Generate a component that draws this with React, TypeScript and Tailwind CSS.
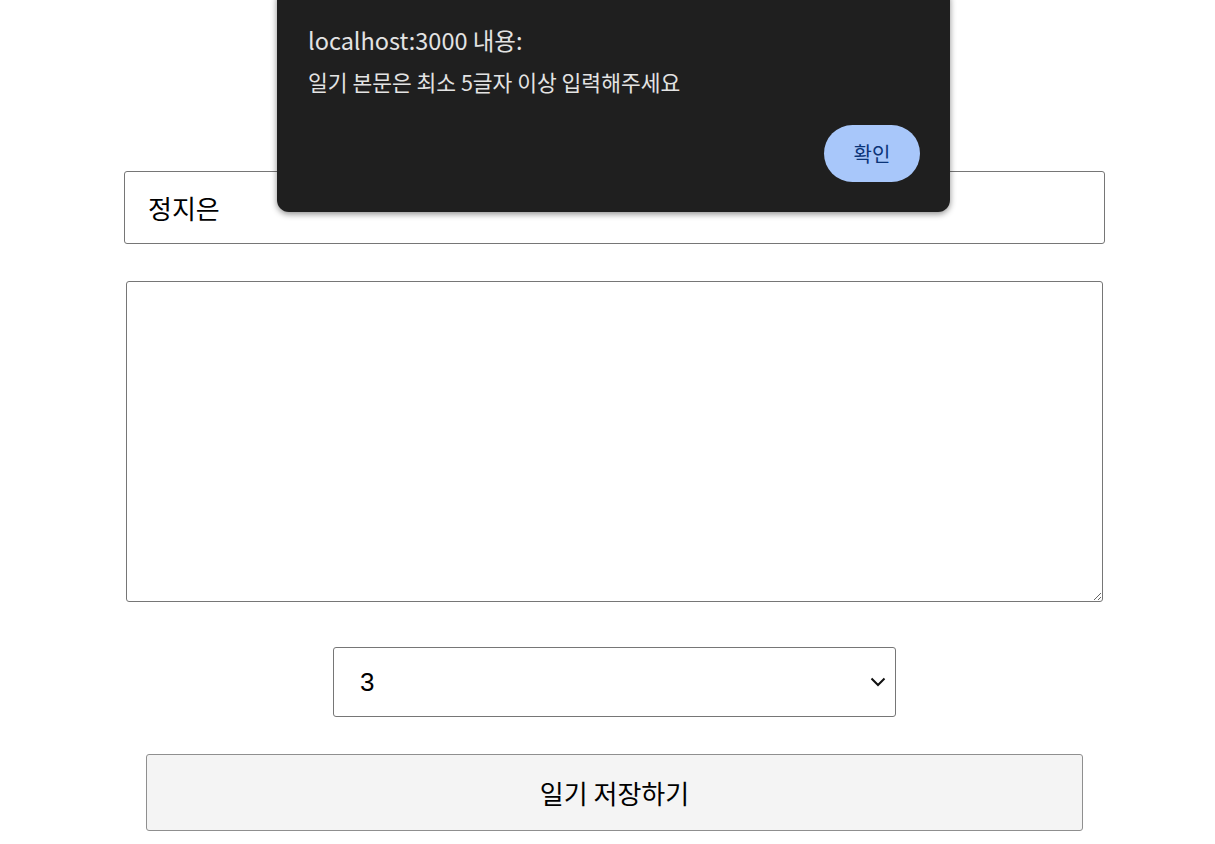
import React from "react";

const font = { fontFamily: '"Noto Sans CJK KR", "Noto Sans", sans-serif' };

export default function App() {
  return (
    <div className="relative w-[1215px] h-[844px] overflow-hidden bg-white" style={font}>
      <div className="flex flex-col items-center pl-[14px] pt-[171px]">
        <input
          defaultValue="정지은"
          className="w-[981px] h-[73px] border border-[#767676] rounded-[3px] pl-[23px] text-[26px] text-black outline-none"
          style={font}
        />
        <textarea
          className="mt-[37px] w-[977px] h-[321px] border border-[#767676] rounded-[3px] outline-none resize-y"
          style={font}
        />
        <div className="mt-[45px] relative w-[563px] h-[70px] border border-[#767676] rounded-[3px] flex items-center pl-[26px]">
          <span className="text-[26px] text-black" style={{ fontFamily: '"Liberation Sans", Arial, sans-serif' }}>3</span>
          <svg className="absolute right-[9px] top-1/2 -translate-y-1/2" width="16" height="10" viewBox="0 0 16 10">
            <path d="M1.5 1.5 L8 8 L14.5 1.5" fill="none" stroke="#111" strokeWidth="2" />
          </svg>
        </div>
        <button
          className="mt-[37px] w-[937px] h-[77px] border border-[#8f8f8f] rounded-[3px] bg-[#f4f4f4] text-[26px] text-black"
          style={font}
        >
          일기 저장하기
        </button>
      </div>

      <div className="absolute left-[277px] top-[-12px] w-[673px] h-[224px] bg-[#1f1f1f] rounded-[12px] shadow-[0_2px_6px_rgba(0,0,0,0.45)] flex flex-col px-[31px] pt-[36px]">
        <div className="text-[23.5px] leading-[32px] text-[#e3e3e3]">localhost:3000 내용:</div>
        <div className="mt-[12px] text-[21.5px] leading-[28px] text-[#e3e3e3]">일기 본문은 최소 5글자 이상 입력해주세요</div>
        <div className="flex justify-end mt-[29px]">
          <button className="w-[96px] h-[57px] rounded-full bg-[#a8c7fa] text-[20px] text-[#0b3478] mr-[-1px]">확인</button>
        </div>
      </div>
    </div>
  );
}
